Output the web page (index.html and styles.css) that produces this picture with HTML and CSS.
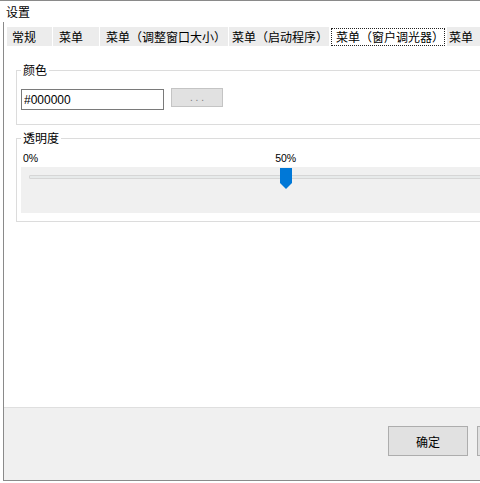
FILE: index.html
```html
<!DOCTYPE html>
<html lang="zh-CN">
<head>
  <meta charset="UTF-8" />
  <meta name="viewport" content="width=device-width, initial-scale=1.0"/>
  <title>设置</title>
  <link rel="stylesheet" href="styles.css">
</head>
<body>

  <div class="titlebar">设置</div>

  <div class="frame">

    <!-- tab strip -->
    <div class="tabs">
      <div class="tab">常规</div>
      <div class="tab">菜单</div>
      <div class="tab">菜单（调整窗口大小）</div>
      <div class="tab">菜单（启动程序）</div>
      <div class="tab tab-active"><span class="tab-focus">菜单（窗户调光器）</span></div>
      <div class="tab">菜单</div>
    </div>

    <!-- dimmer page -->
    <div class="page">
      <fieldset class="group group-color">
        <legend>颜色</legend>
        <div class="color-row">
          <input class="color-input" type="text" value="#000000" />
          <button class="pick-btn">. . .</button>
        </div>
      </fieldset>

      <fieldset class="group group-opacity">
        <legend>透明度</legend>
        <div class="scale">
          <span>0%</span>
          <span class="scale-mid">50%</span>
        </div>
        <div class="slider">
          <div class="slider-track"></div>
          <svg class="slider-thumb" width="12" height="21" viewBox="0 0 12 21">
            <polygon points="0,0 12,0 12,15 6,21 0,15" fill="#0078d7" />
          </svg>
        </div>
      </fieldset>
    </div>

    <!-- dialog buttons (second one runs off the right edge) -->
    <div class="footer">
      <button class="btn">确定</button>
      <button class="btn" aria-label="取消"></button>
    </div>

  </div>

</body>
</html>
```

FILE: styles.css
```css
:root {
  --border: #8a8a8a;
  --face: #f0f0f0;
  --line: #dcdcdc;
  --btn: #e1e1e1;
  --btn-border: #adadad;
  --accent: #0078d7;
}

* {
  margin: 0;
  padding: 0;
  box-sizing: border-box;
}

body {
  width: 480px;
  height: 483px;
  overflow: hidden;
  background: #ffffff;
  color: #000000;
  font-family: "Noto Sans CJK SC", "Liberation Sans", sans-serif;
  font-size: 12px;
}

.titlebar {
  height: 22px;
  border-top: 1px solid var(--border);
  padding-left: 6px;
  line-height: 21px;
}

.frame {
  display: flex;
  flex-direction: column;
  width: 520px;
  height: 459px;
  margin-left: 3px;
  border-left: 1px solid var(--border);
  border-bottom: 1px solid var(--border);
}

/* tabs */
.tabs {
  display: flex;
  height: 21px;
  margin-top: 4px;
  padding-left: 3px;
}

.tab {
  flex: none;
  height: 19px;
  margin-top: 1px;
  margin-right: 1px;
  padding-left: 5px;
  background: #ececec;
  line-height: 19px;
  white-space: nowrap;
}

.tab:nth-child(1) { width: 45px; }
.tab:nth-child(2) { width: 46px; padding-left: 6px; }
.tab:nth-child(3) { width: 128px; padding-left: 6px; }
.tab:nth-child(4) { width: 100px; padding-left: 3px; }
.tab:nth-child(6) { width: 50px; padding-left: 2px; }

.tab-active {
  width: 116px;
  height: 21px;
  margin-top: 0;
  padding: 2px 1px 1px;
  background: #ffffff;
}

.tab-focus {
  display: block;
  height: 18px;
  padding-left: 4px;
  border: 1px dotted #222;
  line-height: 16px;
}

/* group boxes */
.page {
  flex: 1;
  min-height: 0;
}

.group {
  margin: 0 0 0 12px;
  padding: 11px 4px 14px;
  border: 1px solid var(--line);
  min-width: 0;
}

.group legend {
  padding: 0 2px;
  line-height: 16px;
}

.group-color {
  margin-top: 15px;
}

.group-opacity {
  margin-top: 5px;
  padding-top: 0;
  padding-bottom: 8px;
}

.color-row {
  display: flex;
  align-items: flex-start;
  height: 21px;
}

.color-input {
  width: 143px;
  height: 21px;
  padding: 0 2px;
  border: 1px solid #7a7a7a;
  font-family: "Liberation Sans", sans-serif;
  font-size: 12px;
  color: #000;
  outline: none;
}

.pick-btn {
  width: 52px;
  height: 19px;
  margin: -1px 0 0 7px;
  background: var(--btn);
  border: 1px solid #c4c4c4;
  color: #7a7a7a;
  font-family: "Liberation Sans", sans-serif;
  font-size: 10px;
}

/* opacity slider */
.scale {
  display: flex;
  align-items: flex-end;
  height: 21px;
  padding: 0 0 3px 2px;
  font-family: "Liberation Sans", sans-serif;
  font-size: 10.5px;
  line-height: 12px;
}

.scale-mid {
  margin-left: 237px;
}

.slider {
  position: relative;
  height: 46px;
  padding: 8px 0 0 8px;
  background: var(--face);
}

.slider-track {
  height: 4px;
  background: #e7eaea;
  border: 1px solid #d6d6d6;
  border-radius: 1px;
}

.slider-thumb {
  position: absolute;
  left: 259px;
  top: 1px;
}

/* footer */
.footer {
  display: flex;
  gap: 9px;
  height: 73px;
  padding: 18px 0 0 384px;
  background: var(--face);
  border-top: 1px solid #dfdfdf;
}

.btn {
  flex: none;
  width: 80px;
  height: 30px;
  background: var(--btn);
  border: 1px solid var(--btn-border);
  font-family: "Noto Sans CJK SC", sans-serif;
  font-size: 12px;
  color: #000;
}
```
